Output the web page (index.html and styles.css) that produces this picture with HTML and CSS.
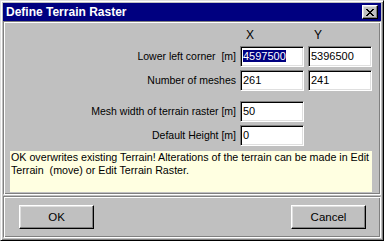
FILE: index.html
```html
<!DOCTYPE html>
<html lang="en">
<head>
  <meta charset="utf-8" />
  <title>Define Terrain Raster</title>
  <link rel="stylesheet" href="styles.css">
</head>
<body>
  <div class="window">
    <div class="titlebar">
      <span class="title">Define Terrain Raster</span>
      <div class="close-btn">
        <svg width="8" height="7" viewBox="0 0 8 7">
          <path d="M0 0h2v1h1v1h2v-1h1v-1h2v1h-1v1h-1v1h-1v1h1v1h1v1h1v1h-2v-1h-1v-1h-2v1h-1v1h-2v-1h1v-1h1v-1h1v-1h-1v-1h-1v-1h-1z" fill="#000"/>
        </svg>
      </div>
    </div>

    <div class="panel">
      <div class="form-grid">
        <span></span>
        <span class="col-head">X</span>
        <span class="col-head">Y</span>

        <label>Lower left corner &nbsp;[m]</label>
        <div class="field"><span class="selected">4597500</span></div>
        <div class="field">5396500</div>

        <label>Number of meshes</label>
        <div class="field">261</div>
        <div class="field">241</div>

        <label class="spaced">Mesh width of terrain raster [m]</label>
        <div class="field spaced">50</div>
        <span></span>

        <label>Default Height [m]</label>
        <div class="field">0</div>
        <span></span>
      </div>

      <div class="info">OK overwrites existing Terrain! Alterations of the terrain can be made in Edit<br>Terrain &nbsp;(move) or Edit Terrain Raster.</div>
    </div>

    <div class="footer">
      <button class="btn">OK</button>
      <button class="btn">Cancel</button>
    </div>
  </div>
</body>
</html>
```

FILE: styles.css
```css
body {
  margin: 0;
  padding: 0;
  background-color: #c0c0c0;
  font-family: 'Liberation Sans', Arial, sans-serif;
  font-size: 10.5px;
  color: #000;
}
.window {
  width: 384px;
  height: 241px;
  box-sizing: border-box;
  background-color: #c0c0c0;
  border: 1px solid;
  border-color: #dfdfdf #000 #000 #dfdfdf;
  box-shadow: inset 1px 1px #fff, inset -1px -1px #808080;
  padding: 2px;
  display: flex;
  flex-direction: column;
}
.titlebar {
  height: 18px;
  background-color: #000080;
  color: #fff;
  display: flex;
  align-items: center;
  justify-content: space-between;
  padding: 0 3px 0 3px;
}
.title {
  font-size: 12px;
  font-weight: bold;
}
.close-btn {
  width: 16px;
  height: 14px;
  box-sizing: border-box;
  background-color: #c0c0c0;
  border: 1px solid;
  border-color: #fff #000 #000 #fff;
  box-shadow: inset -1px -1px #808080, inset 1px 1px #dfdfdf;
  display: flex;
  align-items: center;
  justify-content: center;
}
.panel {
  height: 174px;
  box-sizing: border-box;
  border: 1px solid;
  border-color: #808080 #fff #fff #808080;
  box-shadow: inset 1px 1px #fff, inset -1px -1px #808080;
  padding: 7px 0 0 6px;
}
.form-grid {
  display: grid;
  grid-template-columns: 226px 64px 64px;
  column-gap: 4px;
  row-gap: 3px;
  align-items: center;
}
.form-grid label {
  text-align: right;
  line-height: 13px;
}
.col-head {
  font-size: 12px;
  line-height: 13px;
  padding-left: 6px;
  margin-bottom: 1px;
}
.field {
  height: 21px;
  box-sizing: border-box;
  background-color: #fff;
  border: 1px solid;
  border-color: #808080 #fff #fff #808080;
  box-shadow: inset 1px 1px #000, inset -1px -1px #dfdfdf;
  padding: 0 2px;
  font-size: 11px;
  line-height: 19px;
}
.selected {
  background-color: #000080;
  color: #fff;
}
.spaced {
  margin-top: 7px;
}
.info {
  margin-top: 5px;
  width: 362px;
  height: 41px;
  box-sizing: border-box;
  background-color: #ffffe1;
  padding: 0 1px;
  font-size: 10.7px;
  line-height: 13px;
  white-space: nowrap;
}
.footer {
  margin-top: 1px;
  flex: 1;
  box-sizing: border-box;
  border: 1px solid;
  border-color: #808080 #fff #fff #808080;
  box-shadow: inset 1px 1px #fff, inset -1px -1px #808080;
  display: flex;
  justify-content: space-between;
  align-items: flex-start;
  padding: 8px 14px 0 15px;
}
.btn {
  width: 75px;
  height: 24px;
  box-sizing: border-box;
  background-color: #c0c0c0;
  border: 1px solid;
  border-color: #fff #000 #000 #fff;
  box-shadow: inset -1px -1px #808080, inset 1px 1px #dfdfdf;
  font-family: 'Liberation Sans', Arial, sans-serif;
  font-size: 11.5px;
  color: #000;
  padding: 0;
}
```
